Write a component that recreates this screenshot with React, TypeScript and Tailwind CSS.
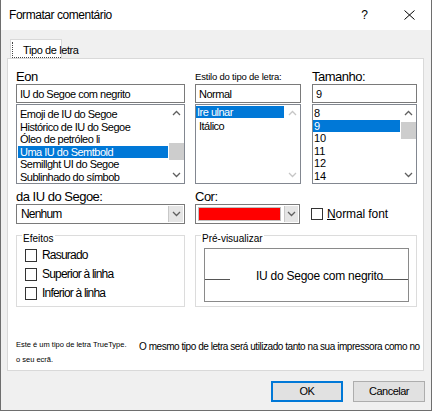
import React from "react";

function Chevron({ dir, color = "#606060" }: { dir: "up" | "down"; color?: string }) {
  return (
    <svg width="9" height="6" viewBox="0 0 9 6">
      <polyline
        points={dir === "up" ? "1,5 4.5,1.5 8,5" : "1,1 4.5,4.5 8,1"}
        fill="none"
        stroke={color}
        strokeWidth="1.3"
      />
    </svg>
  );
}

function ScrollBar({ thumb, disabled }: { thumb?: string; disabled?: boolean }) {
  const color = disabled ? "#c6c6c6" : "#606060";
  return (
    <div className="flex w-[16px] shrink-0 flex-col">
      <div className="flex h-[16px] items-center justify-center">
        <Chevron dir="up" color={color} />
      </div>
      <div className="flex-1">
        {thumb && <div className={`${thumb} ml-px h-[17px] w-[15px] bg-[#cdcdcd]`} />}
      </div>
      <div className="flex h-[16px] items-center justify-center">
        <Chevron dir="down" color={color} />
      </div>
    </div>
  );
}

function Box({ size = "h-[12px] w-[12px]" }: { size?: string }) {
  return <span className={`${size} inline-block shrink-0 border border-[#333] bg-white`} />;
}

const fonts = [
  "Emoji de IU do Segoe",
  "Histórico de IU do Segoe",
  "Óleo de petróleo li",
  "Uma IU do Semtbold",
  "Semillght UI do Segoe",
  "Sublinhado do símbob",
];

const sizes = ["8", "9", "10", "11", "12", "14"];

export default function App() {
  return (
    <div className="flex h-[411px] w-[432px] flex-col border-x border-b border-[#6e6e6e] bg-[#f0f0f0] font-['Liberation_Sans',Arial,sans-serif] text-black">
      {/* Title bar */}
      <div className="flex h-[30px] items-center bg-white pl-[8px] pr-[16px]">
        <span className="text-[12px] tracking-[-0.45px]">Formatar comentário</span>
        <span className="ml-auto text-[12px]">?</span>
        <svg className="ml-[36px]" width="11" height="10" viewBox="0 0 11 10">
          <path d="M0.5 0.5 L10.5 9.5 M10.5 0.5 L0.5 9.5" stroke="#000" strokeWidth="1" fill="none" />
        </svg>
      </div>

      {/* Tab */}
      <div className="ml-[9px] mt-[9px] h-[19px] w-[52px] border-x border-t border-[#d9d9d9] bg-white pl-px pt-[2px]">
        <div className="flex h-[16px] items-end whitespace-nowrap border-b border-l border-dotted border-[#444] pb-[1px] pl-[10px] text-[11px] leading-none tracking-[-0.4px]">
          Tipo de letra
        </div>
      </div>

      {/* Panel */}
      <div className="ml-[6px] flex h-[313px] w-[417px] flex-col border border-[#d9d9d9] bg-white pl-[8px] pt-[10px]">
        {/* Row 1 */}
        <div className="flex">
          <div className="flex w-[169px] flex-col">
            <div className="flex h-[15px] items-end pb-px text-[13px] leading-none tracking-[-0.5px]">Eon</div>
            <div className="flex h-[19px] items-center border border-[#7a7a7a] pl-[3px] pt-px text-[11px] tracking-[-0.5px]">
              IU do Segoe com negrito
            </div>
            <div className="mt-px flex h-[80px] border border-[#828790]">
              <div className="flex-1 overflow-hidden pl-px pt-[3px] text-[11px] leading-[12.6px] tracking-[-0.5px]">
                {fonts.map((f, i) => (
                  <div
                    key={f}
                    className={`whitespace-nowrap pl-[2px] ${i === 3 ? "bg-[#0078d7] text-white" : ""}`}
                  >
                    {f}
                  </div>
                ))}
              </div>
              <ScrollBar thumb="mt-[22px]" />
            </div>
          </div>

          <div className="ml-[10px] flex w-[106px] flex-col">
            <div className="flex h-[15px] items-end pb-[3px] text-[9.5px] leading-none tracking-[-0.2px]">
              Estilo do tipo de letra:
            </div>
            <div className="flex h-[19px] items-center border border-[#7a7a7a] pl-[3px] pt-px text-[11px] tracking-[-0.5px]">
              Normal
            </div>
            <div className="mt-px flex h-[80px] border border-[#828790]">
              <div className="flex-1 overflow-hidden pt-px text-[11px] leading-[12px] tracking-[-0.5px]">
                <div className="bg-[#0078d7] pl-px text-white">Ire ulnar</div>
                <div className="pl-[3px] pt-[2px]">Itálico</div>
              </div>
              <ScrollBar disabled />
            </div>
          </div>

          <div className="ml-[11px] flex w-[105px] flex-col">
            <div className="flex h-[15px] items-end pb-px text-[13px] leading-none tracking-[-0.5px]">Tamanho:</div>
            <div className="flex h-[19px] items-center border border-[#7a7a7a] pl-[3px] pt-px text-[11px]">9</div>
            <div className="mt-px flex h-[80px] border border-[#828790]">
              <div className="flex-1 overflow-hidden pt-[2px] text-[11px] leading-[12.5px]">
                {sizes.map((s, i) => (
                  <div key={s} className={`pl-px ${i === 1 ? "bg-[#0078d7] text-white" : ""}`}>
                    {s}
                  </div>
                ))}
              </div>
              <ScrollBar thumb="mt-px" />
            </div>
          </div>
        </div>

        {/* Row 2 */}
        <div className="mt-[5px] flex">
          <div className="flex w-[169px] flex-col">
            <div className="flex h-[15px] items-end pb-px text-[13px] leading-none tracking-[-0.5px]">
              da IU do Segoe:
            </div>
            <div className="flex h-[20px] border border-[#7a7a7a]">
              <div className="flex flex-1 items-center pl-[4px] text-[12px] tracking-[-0.8px]">Nenhum</div>
              <div className="m-px flex w-[15px] items-center justify-center border-l border-[#c8c8c8] bg-[#e5e5e5]">
                <Chevron dir="down" />
              </div>
            </div>
          </div>

          <div className="ml-[10px] flex w-[105px] flex-col">
            <div className="flex h-[15px] items-end pb-px text-[13px] leading-none tracking-[-0.5px]">Cor:</div>
            <div className="flex h-[20px] border border-[#7a7a7a]">
              <div className="flex flex-1 p-[2px]">
                <div className="flex-1 border border-[#c0c0c0] bg-[#ff0000]" />
              </div>
              <div className="m-px flex w-[14px] items-center justify-center border-l border-[#c8c8c8] bg-[#e5e5e5]">
                <Chevron dir="down" />
              </div>
            </div>
          </div>

          <div className="ml-[11px] flex items-end pb-[4px]">
            <Box />
            <span className="ml-[4px] text-[12px] leading-[12px] tracking-[-0.1px]">
              <span className="underline">N</span>ormal font
            </span>
          </div>
        </div>

        {/* Row 3 */}
        <div className="mt-[11px] flex">
          <div className="relative flex h-[72px] w-[169px] flex-col gap-[6px] border border-[#dcdcdc] pl-[8px] pt-[13px]">
            <span className="absolute left-[5px] top-[-2px] bg-white px-px text-[10px] leading-none">Efeitos</span>
            {["Rasurado", "Superior à linha", "Inferior à linha"].map((t) => (
              <div key={t} className="flex h-[13px] items-center">
                <Box size="h-[13px] w-[12px]" />
                <span className="ml-[5px] text-[12px] leading-[13px] tracking-[-0.8px]">{t}</span>
              </div>
            ))}
          </div>

          <div className="relative ml-[10px] h-[72px] w-[222px] border border-[#dcdcdc] pl-[8px] pt-[12px]">
            <span className="absolute left-[5px] top-[-2px] bg-white px-px text-[10px] leading-none">
              Pré-visualizar
            </span>
            <div className="flex h-[54px] w-[205px] items-start border border-[#8a8a8a] pt-[20px]">
              <div className="mt-[10px] h-px w-[25px] bg-[#555]" />
              <span className="ml-[26px] whitespace-nowrap text-[12px] leading-[14px] tracking-[-0.25px]">
                IU do Segoe com negrito
              </span>
              <div className="-ml-[3px] mt-[10px] h-px flex-1 bg-[#555]" />
            </div>
          </div>
        </div>

        {/* Bottom note */}
        <div className="mt-[30px] flex items-start">
          <div className="flex w-[123px] flex-col text-[7.5px] leading-[15px]">
            <span>Este é um tipo de letra TrueType.</span>
            <span>o seu ecrã.</span>
          </div>
          <span className="mt-[2px] whitespace-nowrap text-[10px] leading-[15px] tracking-[-0.45px]">
            O mesmo tipo de letra será utilizado tanto na sua impressora como no
          </span>
        </div>
      </div>

      {/* Buttons */}
      <div className="mt-[10px] flex justify-end gap-[10px] pr-[6px]">
        <button className="h-[21px] w-[72px] border border-[#0078d7] bg-[#e1e1e1] text-[11px] tracking-[-0.5px] shadow-[inset_0_0_0_1px_#0078d7]">
          OK
        </button>
        <button className="h-[21px] w-[72px] border border-[#adadad] bg-[#e1e1e1] text-[11px] tracking-[-0.5px]">
          Cancelar
        </button>
      </div>
    </div>
  );
}
